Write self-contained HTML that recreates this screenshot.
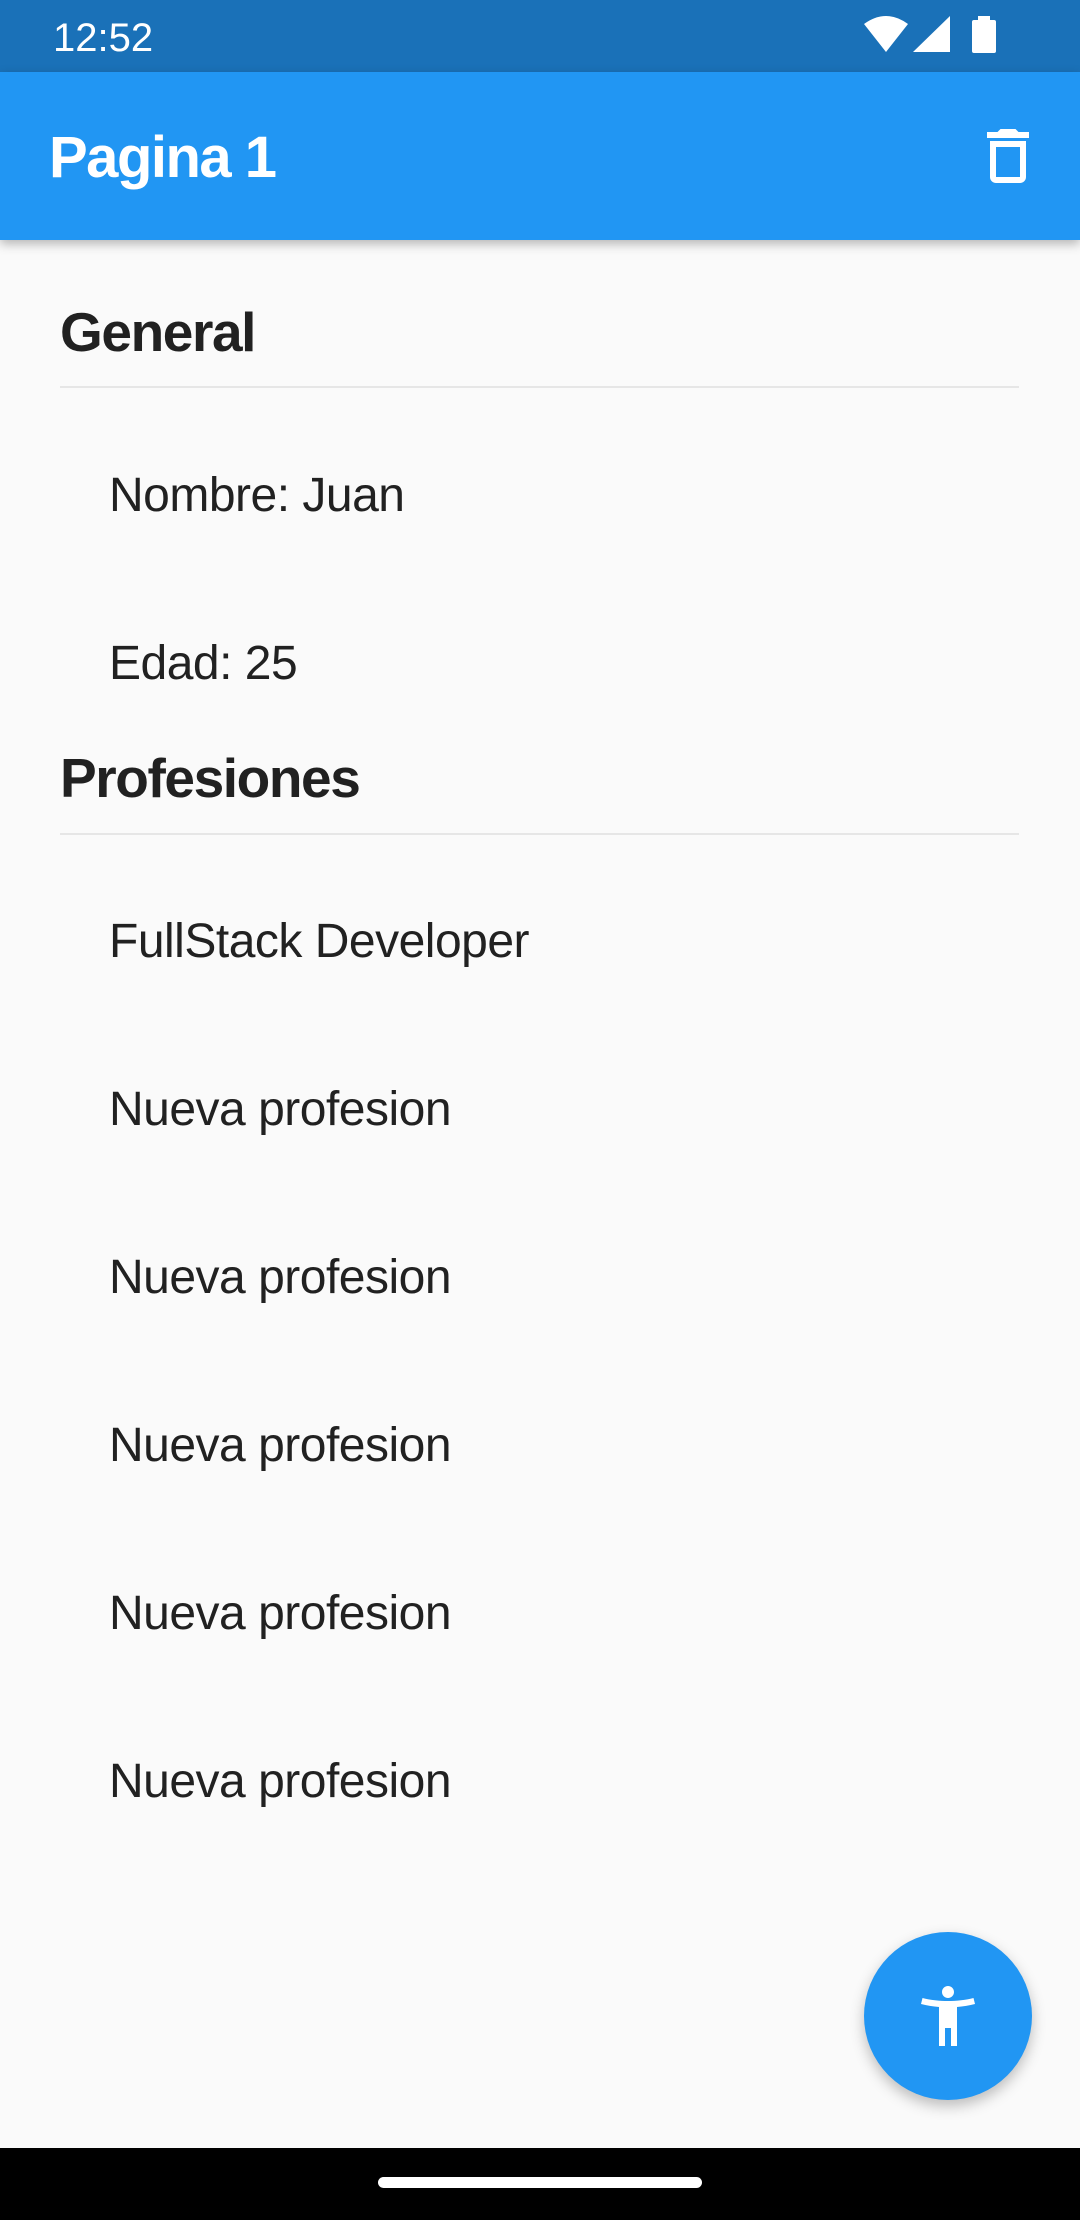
<!DOCTYPE html>
<html><head><meta charset="utf-8"><style>
*{margin:0;padding:0;box-sizing:border-box}
body{width:1080px;height:2220px;background:#fafafa;position:relative;overflow:hidden;font-family:"Liberation Sans",sans-serif;color:#212121}
.a{position:absolute;line-height:1;white-space:nowrap}
.it{left:109px;font-size:48px;letter-spacing:-0.5px}
.h{left:60px;font-size:55px;font-weight:bold;letter-spacing:-1.4px}
.dv{position:absolute;left:60px;width:959px;height:2px;background:#e6e6e6}
</style></head><body>
<div style="position:absolute;top:0;left:0;width:1080px;height:72px;background:#1a71b8"></div>
<div class="a" style="left:53px;top:18px;font-size:40px;color:#fff">12:52</div>
<svg style="position:absolute;left:862px;top:14px" width="140" height="42" viewBox="0 0 140 42">
<path d="M2 10 Q24 -6 46 10 L24 38 Z" fill="#fff"/>
<path d="M51 38 L88 38 L88 2 Z" fill="#fff"/>
<rect x="110" y="6" width="24" height="33" rx="2" fill="#fff"/><rect x="116" y="2" width="12" height="6" fill="#fff"/>
</svg>
<div style="position:absolute;top:72px;left:0;width:1080px;height:168px;background:#2196f3;box-shadow:0 4px 10px rgba(0,0,0,.28)"></div>
<div class="a" style="left:49px;top:129px;font-size:58px;font-weight:bold;letter-spacing:-1.5px;color:#fff">Pagina 1</div>
<svg style="position:absolute;left:972px;top:120px" width="72" height="72" viewBox="0 0 24 24"><path fill="#fff" d="M6 19c0 1.1.9 2 2 2h8c1.1 0 2-.9 2-2V7H6v12zM8 9h8v10H8V9zm7.5-5l-1-1h-5l-1 1H5v2h14V4z"/></svg>
<div class="a h" style="top:305px">General</div>
<div class="dv" style="top:386px"></div>
<div class="a it" style="top:472px">Nombre: Juan</div>
<div class="a it" style="top:640px">Edad: 25</div>
<div class="a h" style="top:751px">Profesiones</div>
<div class="dv" style="top:833px"></div>
<div class="a it" style="top:918px">FullStack Developer</div>
<div class="a it" style="top:1086px">Nueva profesion</div>
<div class="a it" style="top:1254px">Nueva profesion</div>
<div class="a it" style="top:1422px">Nueva profesion</div>
<div class="a it" style="top:1590px">Nueva profesion</div>
<div class="a it" style="top:1758px">Nueva profesion</div>
<div style="position:absolute;left:864px;top:1932px;width:168px;height:168px;border-radius:50%;background:#2196f3;box-shadow:0 6px 14px rgba(0,0,0,.25)"></div>
<svg style="position:absolute;left:912px;top:1980px" width="72" height="72" viewBox="0 0 24 24"><path fill="#fff" d="M20.5 6c-2.61.7-5.670 1-8.5 1s-5.89-.3-8.5-1L3 8c1.86.5 4 .83 6 1v13h2v-6h2v6h2V9c2-.17 4.14-.5 6-1l-.5-2zM12 6c1.1 0 2-.9 2-2s-.9-2-2-2-2 .9-2 2 .9 2 2 2z"/></svg>
<div style="position:absolute;left:0;top:2148px;width:1080px;height:72px;background:#000"></div>
<div style="position:absolute;left:378px;top:2177px;width:324px;height:11px;border-radius:6px;background:#fff"></div>
</body></html>
